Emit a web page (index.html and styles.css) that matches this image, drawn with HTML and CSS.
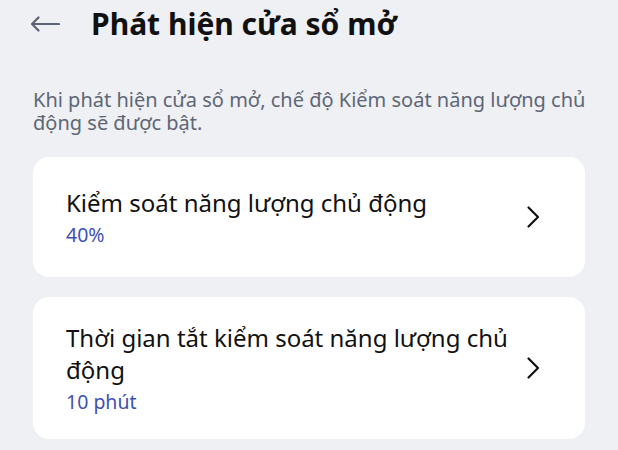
FILE: index.html
```html
<!DOCTYPE html>
<html lang="vi">
<head>
<meta charset="utf-8">
<link rel="stylesheet" href="styles.css">
</head>
<body>
<header class="topbar">
  <svg class="back" width="30" height="16" viewBox="0 0 30 16" aria-hidden="true">
    <path d="M29 8H2M8.5 1.5L2 8l6.5 6.5" fill="none" stroke="#5b6376" stroke-width="2.2" stroke-linecap="round" stroke-linejoin="round"/>
  </svg>
  <h1 class="title">Phát hiện cửa sổ mở</h1>
</header>
<p class="desc">Khi phát hiện cửa sổ mở, chế độ Kiểm soát năng lượng chủ động sẽ được bật.</p>
<div class="list">
  <div class="card">
    <div class="card-text">
      <div class="card-title">Kiểm soát năng lượng chủ động</div>
      <div class="card-sub">40%</div>
    </div>
    <svg class="chev" width="16" height="24" viewBox="0 0 16 24" aria-hidden="true"><path d="M3.5 2.5l9.5 9.5-9.5 9.5" fill="none" stroke="#111" stroke-width="2.2" stroke-linecap="round" stroke-linejoin="round"/></svg>
  </div>
  <div class="card">
    <div class="card-text">
      <div class="card-title">Thời gian tắt kiểm soát năng lượng chủ động</div>
      <div class="card-sub">10 phút</div>
    </div>
    <svg class="chev" width="16" height="24" viewBox="0 0 16 24" aria-hidden="true"><path d="M3.5 2.5l9.5 9.5-9.5 9.5" fill="none" stroke="#111" stroke-width="2.2" stroke-linecap="round" stroke-linejoin="round"/></svg>
  </div>
</div>
</body>
</html>
```
FILE: styles.css
```css
html, body {
  margin: 0;
  padding: 0;
}
body {
  background: #eef0f4;
  font-family: "Noto Sans", "DejaVu Sans", sans-serif;
  width: 618px;
  height: 450px;
  overflow: hidden;
}
.topbar {
  display: flex;
  align-items: center;
  height: 48px;
  padding-left: 30px;
  gap: 31px;
}
.back {
  flex: none;
}
.title {
  margin: 0;
  font-size: 30px;
  font-weight: 700;
  color: #111;
  line-height: 36px;
}
.desc {
  margin: 40px 18px 0 33px;
  font-size: 20px;
  line-height: 23px;
  color: #5f6674;
}
.list {
  display: flex;
  flex-direction: column;
  gap: 20px;
  margin: 23px 33px 0;
}
.card {
  background: #fff;
  border-radius: 16px;
  min-height: 120px;
  box-sizing: border-box;
  padding: 25px 44px 25px 33px;
  display: flex;
  align-items: center;
  gap: 8px;
}
.card-text {
  flex: 1;
  display: flex;
  flex-direction: column;
  gap: 4px;
}
.card-title {
  font-size: 24px;
  line-height: 32px;
  color: #111;
}
.card-sub {
  font-size: 19.5px;
  line-height: 24px;
  color: #4150b5;
}
.chev {
  flex: none;
}
```
